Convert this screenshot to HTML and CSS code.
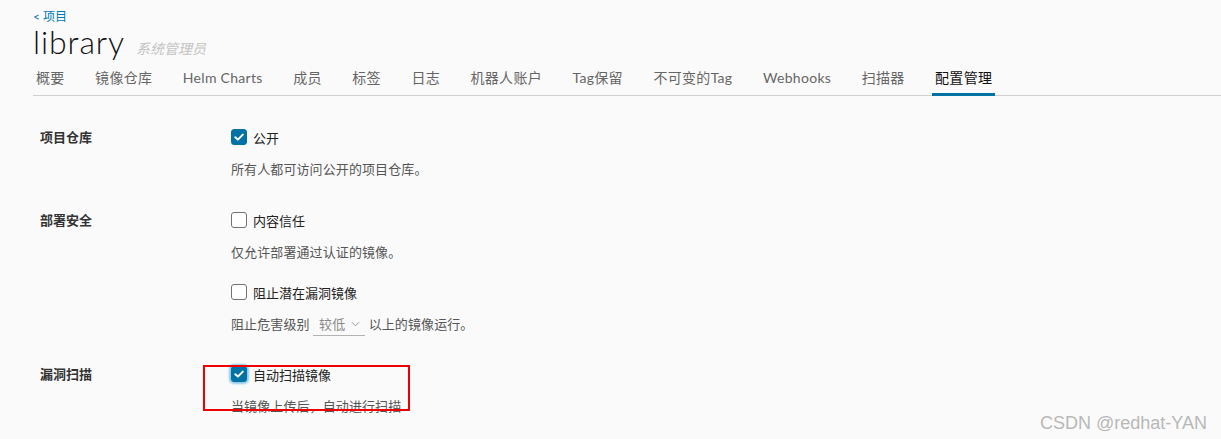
FILE: index.html
```html
<!DOCTYPE html>
<html lang="zh">
<head>
<meta charset="utf-8">
<link rel="stylesheet" href="styles.css">
</head>
<body>
<div class="page">
  <header class="head">
    <a class="back">&lt; 项目</a>
    <div class="title-row">
      <h1 class="title">library</h1>
      <span class="role">系统管理员</span>
    </div>
    <nav class="tabs">
      <span class="tab">概要</span>
      <span class="tab">镜像仓库</span>
      <span class="tab">Helm Charts</span>
      <span class="tab">成员</span>
      <span class="tab">标签</span>
      <span class="tab">日志</span>
      <span class="tab">机器人账户</span>
      <span class="tab">Tag保留</span>
      <span class="tab">不可变的Tag</span>
      <span class="tab">Webhooks</span>
      <span class="tab">扫描器</span>
      <span class="tab active">配置管理</span>
    </nav>
  </header>

  <section class="form">
    <div class="row first">
      <div class="label">项目仓库</div>
      <div class="ctrl">
        <div class="check-line"><span class="cb checked"><svg viewBox="0 0 16 16" width="16" height="16"><path d="M4.3 8.2 L6.9 10.6 L11.8 5.6" fill="none" stroke="#fff" stroke-width="2" stroke-linecap="round" stroke-linejoin="round"/></svg></span><span class="cb-text">公开</span></div>
        <p class="help">所有人都可访问公开的项目仓库。</p>
      </div>
    </div>
    <div class="row">
      <div class="label">部署安全</div>
      <div class="ctrl">
        <div class="check-line"><span class="cb"></span><span class="cb-text">内容信任</span></div>
        <p class="help">仅允许部署通过认证的镜像。</p>
        <div class="check-line second"><span class="cb"></span><span class="cb-text">阻止潜在漏洞镜像</span></div>
        <p class="help">阻止危害级别 <span class="select">较低<svg class="chev" viewBox="0 0 10 6" width="9" height="6"><path d="M1 1 L5 5 L9 1" fill="none" stroke="#8c8c8c" stroke-width="1"/></svg></span> 以上的镜像运行。</p>
      </div>
    </div>
    <div class="row last">
      <div class="label">漏洞扫描</div>
      <div class="ctrl">
        <div class="check-line"><span class="cb checked focus"><svg viewBox="0 0 16 16" width="16" height="16"><path d="M4.3 8.2 L6.9 10.6 L11.8 5.6" fill="none" stroke="#fff" stroke-width="2" stroke-linecap="round" stroke-linejoin="round"/></svg></span><span class="cb-text">自动扫描镜像</span></div>
        <p class="help">当镜像上传后，自动进行扫描</p>
      </div>
    </div>
  </section>
</div>
<div class="annot"></div>
<div class="watermark">CSDN @redhat-YAN</div>
</body>
</html>
```

FILE: styles.css
```css
html, body {
  margin: 0;
  padding: 0;
  background: #fafafa;
  height: 100%;
  overflow: hidden;
}
body {
  font-family: "Lato", "Noto Sans CJK SC", sans-serif;
  color: #333;
  position: relative;
}
.page {
  padding-left: 33px;
}
.head {
  display: flex;
  flex-direction: column;
}
.back {
  margin-top: 11px;
  font-size: 12px;
  line-height: 12px;
  height: 12px;
  color: #0079b8;
}
.title-row {
  display: flex;
  align-items: baseline;
  height: 38px;
}
.title {
  margin: 0;
  font-size: 32px;
  line-height: 38px;
  font-weight: 300;
  color: #111;
  letter-spacing: 0.9px;
}
.role {
  margin-left: 11px;
  font-size: 14px;
  font-style: italic;
  color: #c4c4c4;
}
.tabs {
  display: flex;
  gap: 24.5px;
  margin-top: 8px;
  border-bottom: 1px solid #d0d0d0;
}
.tab {
  padding: 0 3px 7px;
  font-size: 14px;
  line-height: 17px;
  color: #666;
  border-bottom: 3px solid transparent;
  margin-bottom: -1px;
  letter-spacing: 0.3px;
}
.tab.active {
  color: #111;
  border-bottom-color: #0072a3;
}
.form {
  padding-left: 7px;
  padding-top: 32px;
  display: flex;
  flex-direction: column;
}
.row {
  display: flex;
  padding-bottom: 29px;
}
.row.first { padding-bottom: 33px; }
.row.last { padding-bottom: 0; }
.label {
  width: 191px;
  flex: none;
  font-size: 13px;
  font-weight: 700;
  color: #333;
  line-height: 16px;
  padding-top: 1px;
}
.ctrl {
  display: flex;
  flex-direction: column;
}
.check-line {
  display: flex;
  align-items: center;
  height: 18px;
}
.check-line.second { margin-top: 22px; }
.cb {
  width: 16px;
  height: 16px;
  box-sizing: border-box;
  border: 1px solid #737373;
  border-radius: 3px;
  background: #fff;
  display: inline-flex;
}
.cb.checked {
  background: #0072a3;
  border-color: #0072a3;
}
.cb svg { display: block; margin: -1px; }
.cb.focus {
  box-shadow: 0 0 2px 2px #8fcbea;
}
.cb-text {
  margin-left: 6px;
  font-size: 13px;
  color: #222;
}
.help {
  margin: 14px 0 0;
  font-size: 13px;
  line-height: 18px;
  color: #565656;
  letter-spacing: 0.1px;
}
.select {
  display: inline-flex;
  align-items: center;
  gap: 6px;
  padding: 0 5px 2px 6px;
  border-bottom: 1px solid #b3b3b3;
  color: #8a8a8a;
}
.chev { display: block; }
.annot {
  position: absolute;
  left: 203px;
  top: 365px;
  width: 203px;
  height: 42px;
  border: 2px solid #ee0000;
}
.watermark {
  position: absolute;
  right: 14px;
  top: 413px;
  font-family: "Liberation Sans", "DejaVu Sans", sans-serif;
  font-size: 18px;
  color: #b8b8b8;
}
```
